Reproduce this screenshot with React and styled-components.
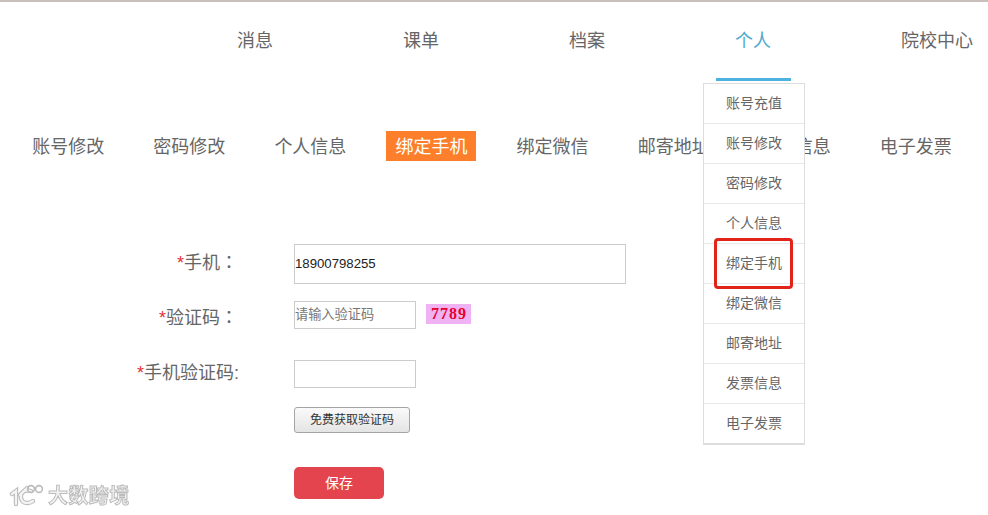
import styled, { createGlobalStyle } from "styled-components";

const GlobalStyle = createGlobalStyle`
  html, body {
    margin: 0;
    padding: 0;
    background: #fff;
  }
  body {
    font-family: "Liberation Sans", "Noto Sans CJK SC", sans-serif;
    overflow: hidden;
  }
`;

const Page = styled.div`
  position: relative;
  width: 988px;
  height: 515px;
  overflow: hidden;
  border-top: 2px solid #c9bfbb;
  box-sizing: border-box;
`;

const TopNav = styled.ul`
  display: flex;
  gap: 130px;
  list-style: none;
  margin: 0;
  padding: 0 0 0 237px;
  height: 80px;
  white-space: nowrap;
`;

const TopItem = styled.li`
  position: relative;
  font-size: 18px;
  line-height: 78px;
  height: 78px;
  color: ${(p) => (p.$active ? "#4fa9cf" : "#666")};
  &::after {
    content: "";
    display: ${(p) => (p.$active ? "block" : "none")};
    position: absolute;
    left: -19px;
    top: 76px;
    width: 75px;
    height: 3px;
    background: #4db3de;
  }
`;

const SubNav = styled.ul`
  display: flex;
  gap: 49.1px;
  list-style: none;
  margin: 0;
  padding: 49px 0 0 32.2px;
  white-space: nowrap;
`;

const SubItem = styled.li`
  font-size: 18px;
  line-height: 32px;
  height: 30px;
  color: ${(p) => (p.$active ? "#fff" : "#666")};
  background: ${(p) => (p.$active ? "#fd7f2c" : "transparent")};
  padding: ${(p) => (p.$active ? "0 9px" : "0")};
  margin: ${(p) => (p.$active ? "0 -9px" : "0")};
`;

const Form = styled.form`
  display: flex;
  flex-direction: column;
  margin-top: 83px;
`;

const Row = styled.div`
  display: flex;
  align-items: flex-start;
  height: ${(p) => p.$height}px;
`;

const Label = styled.label`
  width: 294px;
  padding-right: ${(p) => (p.$tight ? "55px" : "56px")};
  padding-top: ${(p) => p.$top || 0}px;
  box-sizing: border-box;
  text-align: right;
  font-size: 18px;
  line-height: ${(p) => p.$lineHeight || 30}px;
  color: #666;
  white-space: nowrap;
  em {
    font-style: normal;
    color: #e1323c;
  }
`;

const Colon = styled.span`
  font-family: "Noto Sans CJK TC", sans-serif;
`;

const Field = styled.div`
  display: flex;
  align-items: center;
  gap: 10px;
`;

const Input = styled.input`
  box-sizing: border-box;
  width: ${(p) => p.$width}px;
  height: ${(p) => p.$height}px;
  border: 1px solid #ccc;
  padding: 0 0 2px;
  margin: 0;
  font-family: "Liberation Sans", "Noto Sans CJK SC", sans-serif;
  font-size: 13.2px;
  color: #222;
  outline: none;
  &::placeholder {
    color: #777;
    opacity: 1;
  }
`;

const Captcha = styled.span`
  display: block;
  width: 45px;
  height: 20px;
  margin-top: -2px;
  padding-left: 1px;
  box-sizing: border-box;
  background: radial-gradient(#e28eea 45%, #efb2f2 46%) 0 0 / 2px 2px;
  color: #e6002e;
  font-family: "Liberation Serif", serif;
  font-weight: 700;
  font-size: 16px;
  line-height: 20px;
  letter-spacing: 1px;
  text-align: center;
`;

const CodeButton = styled.button`
  display: block;
  box-sizing: border-box;
  width: 116px;
  height: 26px;
  margin: 0;
  padding: 0 0 3px;
  border: 1px solid #a4a4a4;
  border-radius: 3px;
  background: linear-gradient(#fafafa, #e4e4e4);
  font-family: "Noto Sans CJK SC", sans-serif;
  font-size: 12px;
  color: #333;
`;

const SaveButton = styled.button`
  display: block;
  width: 90px;
  height: 32px;
  margin: 0;
  padding: 0 0 3px;
  border: 0;
  border-radius: 5px;
  background: #e4444e;
  font-family: "Noto Sans CJK SC", sans-serif;
  font-size: 14px;
  color: #fff;
`;

const Menu = styled.ul`
  position: absolute;
  left: 703px;
  top: 81px;
  width: 102px;
  box-sizing: border-box;
  margin: 0;
  padding: 0;
  list-style: none;
  background: #fff;
  border: 1px solid #ddd;
  border-bottom-width: 2px;
`;

const MenuItem = styled.li`
  height: 40px;
  box-sizing: border-box;
  border-bottom: 1px solid #e8e8e8;
  font-size: 14px;
  line-height: 39px;
  text-align: center;
  color: #666;
  &:last-child {
    border-bottom: 0;
    height: 39px;
  }
`;

const Highlight = styled.div`
  position: absolute;
  left: 714px;
  top: 236px;
  width: 79px;
  height: 51px;
  box-sizing: border-box;
  border: 3px solid #e2231a;
  border-radius: 4px;
`;

const Watermark = styled.div`
  position: absolute;
  left: 9px;
  top: 481px;
  display: flex;
  align-items: center;
  gap: 3px;
  filter: blur(0.4px);
`;

const WatermarkText = styled.span`
  font-family: "Noto Sans CJK SC", sans-serif;
  font-size: 20px;
  font-weight: 700;
  line-height: 24px;
  letter-spacing: 0.4px;
  color: #f4f4f4;
  -webkit-text-stroke: 1px #bcbcbc;
`;

const topItems = ["消息", "课单", "档案", "个人", "院校中心"];
const subItems = ["账号修改", "密码修改", "个人信息", "绑定手机", "绑定微信", "邮寄地址", "发票信息", "电子发票"];
const menuItems = ["账号充值", ...subItems];

const logoStrokes = (
  <>
    <path d="M3 11 L7 8 V21" />
    <path d="M22 8 C15 6 11 10 12 15 C13 21 20 21 24 18" />
    <path d="M11 12 L18 5" />
  </>
);

export default function App() {
  return (
    <Page>
      <GlobalStyle />
      <TopNav>
        {topItems.map((item) => (
          <TopItem key={item} $active={item === "个人"}>
            {item}
          </TopItem>
        ))}
      </TopNav>
      <SubNav>
        {subItems.map((item) => (
          <SubItem key={item} $active={item === "绑定手机"}>
            {item}
          </SubItem>
        ))}
      </SubNav>
      <Form>
        <Row $height={57}>
          <Label $top={2}>
            <em>*</em>手机<Colon>：</Colon>
          </Label>
          <Input $width={332} $height={40} defaultValue="18900798255" />
        </Row>
        <Row $height={59}>
          <Label>
            <em>*</em>验证码<Colon>：</Colon>
          </Label>
          <Field>
            <Input $width={122} $height={28} placeholder="请输入验证码" />
            <Captcha>7789</Captcha>
          </Field>
        </Row>
        <Row $height={47}>
          <Label $tight $lineHeight={26}>
            <em>*</em>手机验证码:
          </Label>
          <Input $width={122} $height={28} />
        </Row>
        <Row $height={60}>
          <Label />
          <CodeButton type="button">免费获取验证码</CodeButton>
        </Row>
        <Row $height={32}>
          <Label />
          <SaveButton type="button">保存</SaveButton>
        </Row>
      </Form>
      <Menu>
        {menuItems.map((item) => (
          <MenuItem key={item}>{item}</MenuItem>
        ))}
      </Menu>
      <Highlight />
      <Watermark>
        <svg width="36" height="24" viewBox="0 0 36 24" fill="none" strokeLinecap="round">
          <g stroke="#bcbcbc" strokeWidth="4.4">{logoStrokes}</g>
          <g stroke="#f4f4f4" strokeWidth="2.2">{logoStrokes}</g>
          <circle cx="22" cy="6" r="3.4" stroke="#bcbcbc" strokeWidth="1.6" />
          <circle cx="30" cy="6" r="3.4" stroke="#bcbcbc" strokeWidth="1.6" />
        </svg>
        <WatermarkText>大数跨境</WatermarkText>
      </Watermark>
    </Page>
  );
}
